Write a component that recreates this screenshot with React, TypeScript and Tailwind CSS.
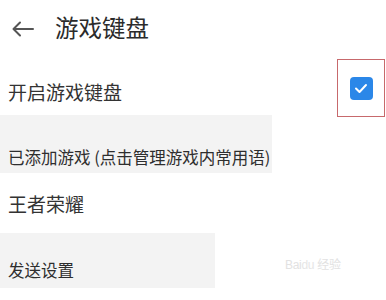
import React from "react";

const font = { fontFamily: '"Noto Sans CJK SC", "Noto Sans", sans-serif' };

export default function App() {
  return (
    <div className="w-[386px] h-[300px] bg-white overflow-hidden text-[#333]" style={font}>
      {/* header */}
      <div className="h-[56px] flex items-center">
        <svg width="22" height="16" viewBox="0 0 22 16" className="ml-[12px] mt-[2px]" fill="none" stroke="#555" strokeWidth="2" strokeLinecap="round" strokeLinejoin="round">
          <path d="M21 8H2" />
          <path d="M8 1.5L1.5 8L8 14.5" />
        </svg>
        <span className="ml-[21px] text-[23.5px] leading-none text-[#2b2b2b]">游戏键盘</span>
      </div>

      {/* toggle row */}
      <div className="h-[59px] flex items-start justify-between">
        <span className="ml-[8px] text-[19px] leading-none mt-[26px]">开启游戏键盘</span>
        <div className="relative w-[48px] h-[58px] mr-[1px] mt-[3px] border border-[#c7696c] flex items-center justify-center">
          <div className="w-[23px] h-[23px] rounded-[4px] bg-[#2b87e8] flex items-center justify-center">
            <svg width="14" height="11" viewBox="0 0 14 11" fill="none" stroke="white" strokeWidth="2" strokeLinecap="round" strokeLinejoin="round">
              <path d="M2 5.5L5.5 9L12 2" />
            </svg>
          </div>
        </div>
      </div>

      {/* section header */}
      <div className="w-[272px] h-[58px] bg-[#f3f3f3] flex items-end overflow-hidden">
        <span className="ml-[8px] mb-[8px] text-[16.5px] leading-none whitespace-nowrap text-[#2e2e2e]">
          已添加游戏 (点击管理游戏内常用语)
        </span>
      </div>

      {/* game row */}
      <div className="h-[60px] flex items-center">
        <span className="ml-[8px] text-[19px] leading-none">王者荣耀</span>
      </div>

      {/* section header 2 */}
      <div className="flex items-start">
        <div className="w-[215px] h-[55px] bg-[#f3f3f3] flex items-end">
          <span className="ml-[8px] mb-[10px] text-[16.5px] leading-none text-[#2e2e2e]">发送设置</span>
        </div>
        <div className="ml-[70px] mt-[26px] text-[12px] leading-none text-[#e2e2e2] tracking-tight" style={{ fontFamily: '"Liberation Sans", "Noto Sans CJK SC", sans-serif' }}>
          Bai<span className="text-[#e6e6e6]">du</span> 经验
        </div>
      </div>
    </div>
  );
}
